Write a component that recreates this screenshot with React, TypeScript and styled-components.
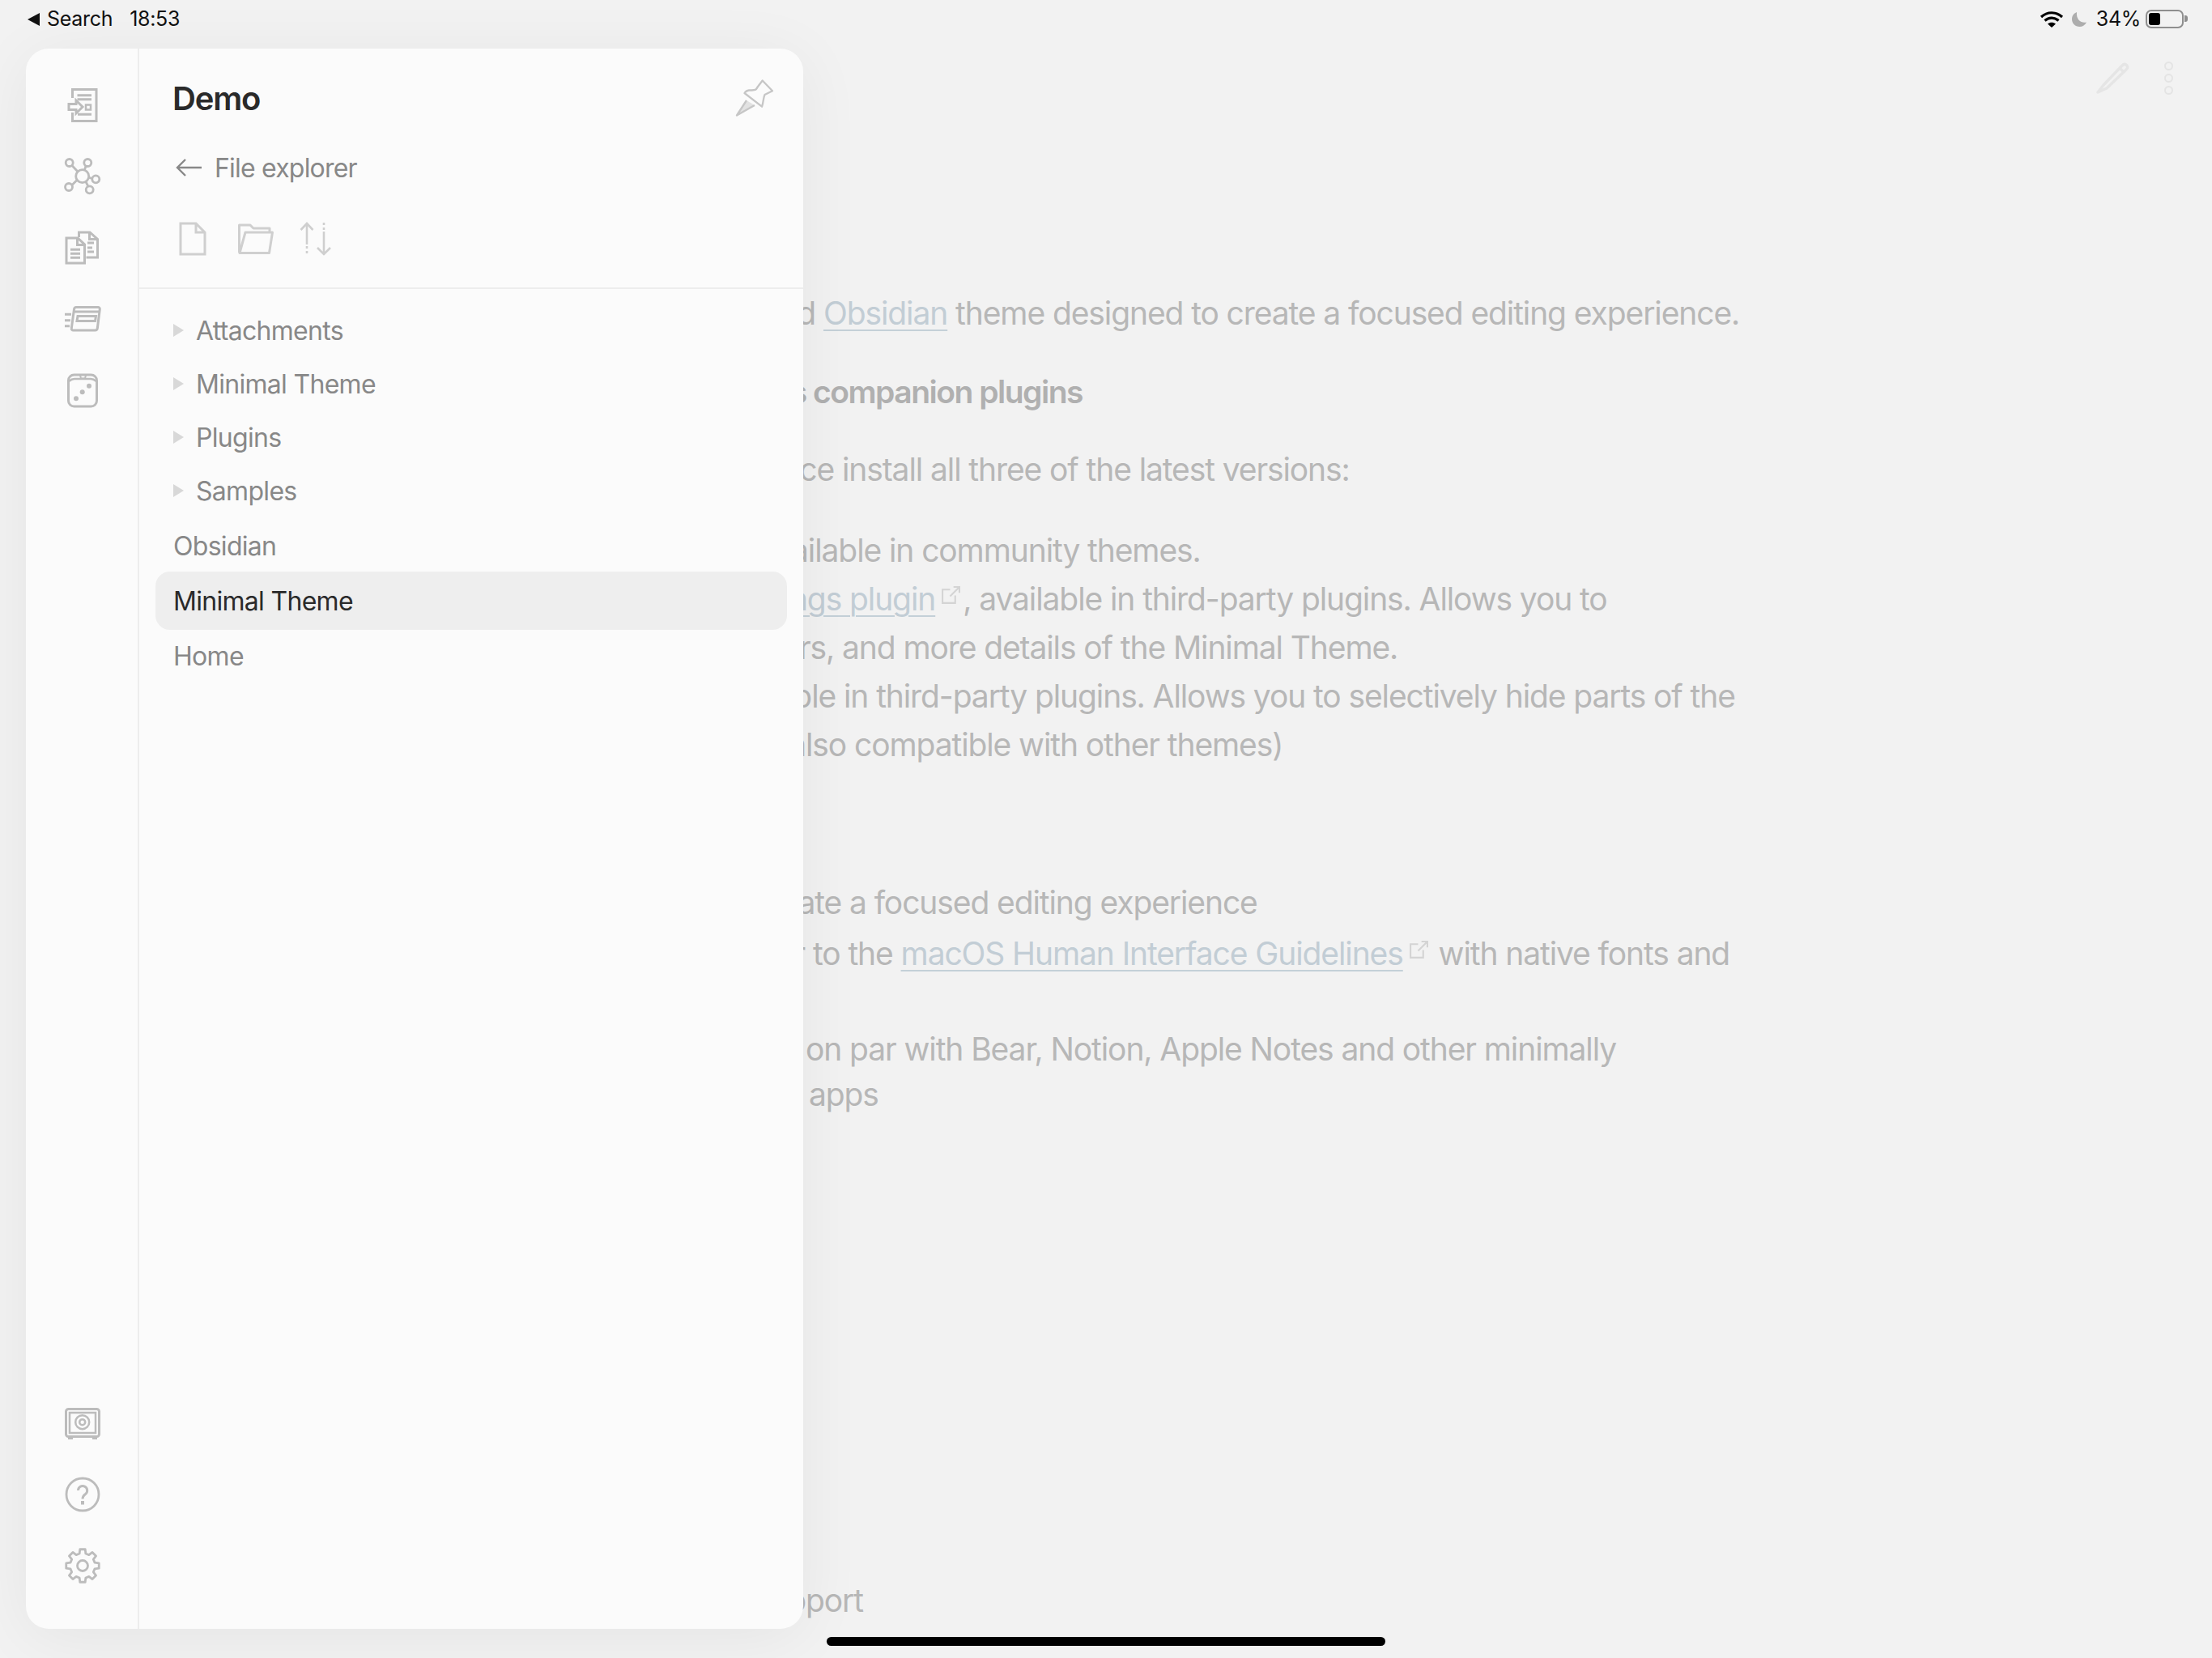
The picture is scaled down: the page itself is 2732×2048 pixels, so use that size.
import * as React from 'react';
import styled, { createGlobalStyle } from 'styled-components';

const GlobalStyle = createGlobalStyle`
  html, body {
    margin: 0;
    padding: 0;
    background: #f2f2f2;
  }
  * {
    box-sizing: border-box;
  }
`

const Screen = styled.div`
  position: relative;
  width: 2732px;
  height: 2048px;
  overflow: hidden;
  background: #f2f2f2;
  font-family: Inter, "Liberation Sans", sans-serif;
`

/* status bar */
const StatusBar = styled.div`
  display: flex;
  align-items: center;
  justify-content: space-between;
  height: 47px;
  padding: 0 35px 0 34px;
  color: #111;
  font-size: 25px;
  line-height: 47px;
  letter-spacing: -0.3px;
`
const StatusGroup = styled.div`
  display: flex;
  align-items: center;
`
const BackCaret = styled.span`
  width: 0;
  height: 0;
  margin-right: 9px;
  border-top: 8px solid transparent;
  border-bottom: 8px solid transparent;
  border-right: 15px solid #111;
`
const Clock = styled.span`
  margin-left: 21px;
`
const BatteryLabel = styled.span`
  margin: 0 6px 0 11px;
`
const Battery = styled.div`
  display: flex;
  align-items: center;
  width: 47px;
  height: 23px;
  padding: 2px;
  border: 2px solid #8e8e8e;
  border-radius: 7px;
  position: relative;

  &::after {
    content: '';
    position: absolute;
    left: 46px;
    top: 5px;
    width: 4px;
    height: 8px;
    background: #8e8e8e;
    border-radius: 0 3px 3px 0;
  }
`
const BatteryFill = styled.div`
  width: 14px;
  height: 15px;
  background: #000;
  border-radius: 3px;
`

/* note behind the drawer */
const NoteToolbar = styled.div`
  display: flex;
  align-items: center;
  justify-content: flex-end;
  gap: 43px;
  height: 96px;
  padding-right: 48px;
  padding-top: 2px;
`
const DotsColumn = styled.div`
  display: flex;
  flex-direction: column;
  gap: 4px;
`
const Dot = styled.div`
  width: 11px;
  height: 11px;
  border: 2px solid #e4e4e4;
  border-radius: 50%;
`
const NoteBody = styled.div`
  padding-top: 214px;
  font-size: 39px;
  line-height: 60px;
  white-space: nowrap;
`
const NoteLine = styled.div<{ $x: number; $gap: number; $bold?: boolean }>`
  padding-left: ${(p) => p.$x}px;
  margin-top: ${(p) => p.$gap}px;
  font-weight: ${(p) => (p.$bold ? 600 : 400)};
  letter-spacing: ${(p) => (p.$bold ? -1.5 : -1.1)}px;
  color: ${(p) => (p.$bold ? '#b0b0b0' : '#b7b7b7')};
`
const NoteLink = styled.span`
  color: #c2cdd5;
  text-decoration: underline;
  text-decoration-color: #c4d0d8;
  text-decoration-thickness: 2px;
  text-underline-offset: 6px;
`
const Lead = styled.span`
  display: inline-block;
  width: 600px;
  margin-left: -600px;
  text-align: right;
  white-space: pre;

  ${NoteLink} & {
    text-decoration: inherit;
    text-decoration-color: #c4d0d8;
    text-decoration-thickness: 2px;
    text-underline-offset: 6px;
  }
`
const ExternalIcon = styled.svg`
  width: 24px;
  height: 23px;
  margin: 0 3px 0 7px;
  vertical-align: 7px;
`

/* drawer */
const Drawer = styled.div`
  position: absolute;
  left: 32px;
  top: 60px;
  width: 960px;
  height: 1952px;
  display: flex;
  background: #fbfbfb;
  border-radius: 28px;
  box-shadow: 0 10px 80px rgba(0, 0, 0, 0.06);
`
const Ribbon = styled.div`
  display: flex;
  flex-direction: column;
  justify-content: space-between;
  width: 140px;
  padding: 26px 0 34px 2px;
  border-right: 2px solid #ededed;
`
const RibbonGroup = styled.div`
  display: flex;
  flex-direction: column;
`
const RibbonButton = styled.div`
  display: flex;
  align-items: center;
  justify-content: center;
  height: 88px;
  color: #bcbcbc;
`
const Pane = styled.div`
  flex: 1;
  display: flex;
  flex-direction: column;
`
const PaneHeader = styled.div`
  height: 297px;
  padding: 0 36px 0 41px;
  border-bottom: 2px solid #ededed;
`
const TitleRow = styled.div`
  display: flex;
  align-items: center;
  justify-content: space-between;
  height: 122px;
`
const Title = styled.div`
  color: #2a2a2a;
  font-size: 40px;
  font-weight: 600;
  letter-spacing: -1.2px;
`
const BackRow = styled.div`
  display: flex;
  align-items: center;
  gap: 15px;
  height: 50px;
  margin-left: 4px;
  color: #888;
  font-size: 32px;
  letter-spacing: -0.8px;
`
const Actions = styled.div`
  display: flex;
  align-items: center;
  gap: 38px;
  margin-top: 42px;
  margin-left: 8px;
  color: #cfcfcf;
`
const SortSlot = styled.div`
  display: flex;
  margin-left: -7px;
`
const FileList = styled.div`
  display: flex;
  flex-direction: column;
  padding: 18px 20px 0 20px;
`
const FolderRow = styled.div`
  display: flex;
  align-items: center;
  height: 66px;
  padding-left: 22px;
  color: #888;
  font-size: 32px;
  letter-spacing: -0.7px;
`
const FolderCaret = styled.span`
  width: 0;
  height: 0;
  margin-right: 15px;
  border-top: 8px solid transparent;
  border-bottom: 8px solid transparent;
  border-left: 13px solid #d8d8d8;
`
const FileRow = styled.div<{ $active?: boolean }>`
  display: flex;
  align-items: center;
  height: ${(p) => (p.$active ? 72 : 68)}px;
  margin: ${(p) => (p.$active ? '-2px 0' : '0')};
  padding-left: 22px;
  border-radius: 18px;
  background: ${(p) => (p.$active ? '#eeeeee' : 'transparent')};
  color: ${(p) => (p.$active ? '#2a2a2a' : '#888')};
  font-size: 32px;
  letter-spacing: -0.7px;
`
const FileGroup = styled.div`
  display: flex;
  flex-direction: column;
  margin-top: 1px;
`

const HomeBar = styled.div`
  position: absolute;
  left: 1021px;
  top: 2022px;
  width: 690px;
  height: 11px;
  background: #000;
  border-radius: 6px;
`

const gearPath = () => {
  const cx = 22
  const cy = 22
  const pts: string[] = []
  for (let i = 0; i < 8; i++) {
    const a = (i * Math.PI) / 4 - Math.PI / 2
    const step = Math.PI / 4
    const p = (r: number, t: number) => `${(cx + r * Math.cos(t)).toFixed(2)} ${(cy + r * Math.sin(t)).toFixed(2)}`
    pts.push(p(15.5, a - step * 0.32), p(20.5, a - step * 0.2), p(20.5, a + step * 0.2), p(15.5, a + step * 0.32))
  }
  return `M${pts.join(' L')} Z`
}

const sv = { fill: 'none', stroke: 'currentColor', strokeWidth: 3 }

const OutlineIcon = () => (
  <svg width="40" height="46" viewBox="0 0 40 46" {...sv}>
    <path d="M7.5 14V3.5H37V42.5H7.5V32" />
    <path d="M13.5 10.7H31M13.5 15.7H31M14 34.3H31" />
    <rect x="24" y="22.5" width="6" height="6" strokeWidth="2.5" />
    <path d="M3 21.5H12V17L20 25L12 33V28.5H3Z" />
  </svg>
)
const GraphIcon = () => (
  <svg width="48" height="48" viewBox="0 0 48 48" {...sv} strokeWidth="2.8">
    <circle cx="23.7" cy="23.7" r="8" />
    <circle cx="7.7" cy="7" r="4.5" />
    <circle cx="30.3" cy="7" r="4.5" />
    <circle cx="40.3" cy="27.3" r="4.5" />
    <circle cx="32.7" cy="40.3" r="4.5" />
    <circle cx="7" cy="37" r="4.5" />
    <path d="M11 10.5L18 18M28 11.5L26.3 16M35.8 26.5L31.5 25.2M30.8 36L28 30.5M11 34.5L17 28.5" />
  </svg>
)
const FilesIcon = () => (
  <svg width="46" height="44" viewBox="0 0 46 44" {...sv}>
    <path d="M3 10H17L25.5 18V41H3ZM16.5 10V18.5H25.5" />
    <path d="M8 24.3H20M8 29.3H20M8 34.3H20" />
    <path d="M18.5 9V3H32L41.5 11.5V34H27.5M31.5 3V11.5H41.5" />
    <path d="M29 16H37M29 22H35M29 27H37" />
  </svg>
)
const CardsIcon = () => (
  <svg width="48" height="36" viewBox="0 0 48 36" {...sv}>
    <path d="M16 3.5H43C44.5 3.5 45.5 4.5 45.3 6L42.3 29.5C42 31.5 41 32 39.5 32H12.5C11 32 10 31 10.3 29.5L13.5 6C13.8 4.3 14.5 3.5 16 3.5Z" />
    <path d="M14 9H45" />
    <path d="M18 14.5H40.5L39.5 20.5H17Z" />
    <path d="M2 12.3H10M2 19.7H9M2 26.7H8" />
  </svg>
)
const DiceIcon = () => (
  <svg width="40" height="44" viewBox="0 0 40 44" {...sv}>
    <rect x="2.5" y="3" width="35" height="39" rx="7" />
    <path d="M3 11C6 8.5 8 8 10 8H30C32 8 34 8.5 37 11" strokeWidth="2.5" />
    <path d="M17 3.5L18 7.5H23L24 3.5" strokeWidth="2" />
    <circle cx="28" cy="16.7" r="3" fill="currentColor" stroke="none" />
    <circle cx="19.7" cy="24.3" r="3" fill="currentColor" stroke="none" />
    <circle cx="12" cy="32.3" r="3" fill="currentColor" stroke="none" />
  </svg>
)
const VaultIcon = () => (
  <svg width="48" height="42" viewBox="0 0 48 42" {...sv}>
    <rect x="3.5" y="3.5" width="41" height="34" rx="3" />
    <rect x="8" y="8" width="32" height="25" strokeWidth="2.5" />
    <circle cx="23.7" cy="19.7" r="8.5" strokeWidth="2.5" />
    <circle cx="23.7" cy="19.7" r="3.5" strokeWidth="2.5" />
    <path d="M6 39.5H12M36 39.5H42" />
  </svg>
)
const HelpIcon = () => (
  <svg width="44" height="44" viewBox="0 0 44 44" {...sv} strokeWidth="2.8">
    <circle cx="22" cy="22" r="20" />
    <path d="M16.5 17a5.6 5.6 0 1 1 9 4.5c-2.5 1.8-3.5 3-3.5 6" strokeWidth="3" />
    <rect x="20" y="30" width="4" height="4.5" fill="currentColor" stroke="none" />
  </svg>
)
const GearIcon = () => (
  <svg width="44" height="44" viewBox="0 0 44 44" {...sv} strokeWidth="2.8">
    <path d={gearPath()} strokeLinejoin="round" />
    <circle cx="22" cy="22" r="6.5" />
  </svg>
)
const PinIcon = () => (
  <svg width="48" height="48" viewBox="0 0 48 48" fill="none" stroke="#c6c6c6" strokeWidth="2.3" strokeLinejoin="round">
    <path d="M33.7 2.5L46 15.3L36.5 20C34.5 24 35 30 33 34.7L11.5 18C13 15.5 15 14.7 17 14.5C21 14.5 25 14.5 26 13L28 10Z" />
    <path d="M14 27L2 45.5L24 33" fill="#e2e2e2" />
  </svg>
)
const BackArrow = () => (
  <svg width="33" height="24" viewBox="0 0 33 24" fill="none" stroke="#888" strokeWidth="2.4">
    <path d="M32 12H2M12 2L2 12L12 22" />
  </svg>
)
const DocIcon = () => (
  <svg width="34" height="42" viewBox="0 0 34 42" {...sv}>
    <path d="M2 2H21L32 13V40H2ZM21 2V13H32" />
  </svg>
)
const FolderIcon = () => (
  <svg width="46" height="40" viewBox="0 0 46 40" {...sv} strokeLinejoin="round">
    <path d="M2.5 37V3H16L20 7H40V12" />
    <path d="M10 12H43.5L39.5 37.5H3Z" />
  </svg>
)
const SortIcon = () => (
  <svg width="40" height="42" viewBox="0 0 40 42" {...sv} strokeWidth="2.6">
    <path d="M9 2V28M1.5 10L9 2L16.5 10" />
    <path d="M9 30V41" strokeDasharray="3 3" />
    <path d="M30 12V40M22 32L30 40L38 32" />
    <path d="M30 1V12" strokeDasharray="3 3" />
  </svg>
)
const WifiIcon = () => (
  <svg width="30" height="22" viewBox="0 0 30 22" fill="none" stroke="#000" strokeWidth="3.2">
    <path d="M2 8C9.5 1 20.5 1 28 8" />
    <path d="M6.5 12.5C11.5 8 18.5 8 23.5 12.5" />
    <path d="M15 21L10 16.5C13 14 17 14 20 16.5Z" fill="#000" stroke="none" />
  </svg>
)
const MoonIcon = () => (
  <svg width="20" height="20" viewBox="0 0 20 20" style={{ marginLeft: 9 }}>
    <path d="M7 1C3 2.5 1 5.8 1 9.5C1 15 5 19 10.5 19C14.2 19 17.5 17 19 13.5C13 15 6 11 7 1Z" fill="#adadad" />
  </svg>
)
const PencilIcon = () => (
  <svg width="42" height="42" viewBox="0 0 42 42" fill="none" stroke="#e5e5e5" strokeWidth="3.4">
    <path d="M10 30L33 6C35 4 37 4 38.5 5.5C40 7 40 9 38 11L14 34L3 39ZM30 9L35.5 14.5" strokeLinejoin="round" />
  </svg>
)
const External = () => (
  <ExternalIcon viewBox="0 0 23 22" fill="none" stroke="#d4d4d4" strokeWidth="2">
    <path d="M11 4H2V20H17V11M11 12L22 1M15 1H22V8" />
  </ExternalIcon>
)

const App = () => {
  return (
    <Screen>
      <GlobalStyle />
      <StatusBar>
        <StatusGroup>
          <BackCaret />
          <span>Search</span>
          <Clock>18:53</Clock>
        </StatusGroup>
        <StatusGroup>
          <WifiIcon />
          <MoonIcon />
          <BatteryLabel>34%</BatteryLabel>
          <Battery>
            <BatteryFill />
          </Battery>
        </StatusGroup>
      </StatusBar>

      <NoteToolbar>
        <PencilIcon />
        <DotsColumn>
          <Dot />
          <Dot />
          <Dot />
        </DotsColumn>
      </NoteToolbar>

      <NoteBody>
        <NoteLine $x={1017} $gap={0}>
          <Lead>distraction-free and </Lead>
          <NoteLink>Obsidian</NoteLink> theme designed to create a focused editing experience.
        </NoteLine>
        <NoteLine $x={1004} $gap={37} $bold>
          <Lead>requires its </Lead>companion plugins
        </NoteLine>
        <NoteLine $x={1040} $gap={36}>
          <Lead>experience </Lead>install all three of the latest versions:
        </NoteLine>
        <NoteLine $x={1098} $gap={40}>
          <Lead>available </Lead>in community themes.
        </NoteLine>
        <NoteLine $x={1049} $gap={0}>
          <NoteLink><Lead>Settings </Lead>plugin</NoteLink><External />, available in third-party plugins. Allows you to
        </NoteLine>
        <NoteLine $x={1040} $gap={0}>
          <Lead>colors, </Lead>and more details of the Minimal Theme.
        </NoteLine>
        <NoteLine $x={1042} $gap={0}>
          <Lead>available </Lead>in third-party plugins. Allows you to selectively hide parts of the
        </NoteLine>
        <NoteLine $x={1055} $gap={0}>
          <Lead>(also </Lead>compatible with other themes)
        </NoteLine>
        <NoteLine $x={1049} $gap={135}>
          <Lead>to create </Lead>a focused editing experience
        </NoteLine>
        <NoteLine $x={1004} $gap={3}>
          <Lead>similar </Lead>to the <NoteLink>macOS Human Interface Guidelines</NoteLink><External /> with native fonts and
        </NoteLine>
        <NoteLine $x={995} $gap={58}>
          <Lead>is </Lead>on par with Bear, Notion, Apple Notes and other minimally
        </NoteLine>
        <NoteLine $x={999} $gap={-4}>
          <Lead>designed </Lead>apps
        </NoteLine>
        <NoteLine $x={995} $gap={565}>
          <Lead>Sup</Lead>port
        </NoteLine>
      </NoteBody>

      <Drawer>
        <Ribbon>
          <RibbonGroup>
            <RibbonButton><OutlineIcon /></RibbonButton>
            <RibbonButton><GraphIcon /></RibbonButton>
            <RibbonButton><FilesIcon /></RibbonButton>
            <RibbonButton><CardsIcon /></RibbonButton>
            <RibbonButton><DiceIcon /></RibbonButton>
          </RibbonGroup>
          <RibbonGroup>
            <RibbonButton><VaultIcon /></RibbonButton>
            <RibbonButton><HelpIcon /></RibbonButton>
            <RibbonButton><GearIcon /></RibbonButton>
          </RibbonGroup>
        </Ribbon>
        <Pane>
          <PaneHeader>
            <TitleRow>
              <Title>Demo</Title>
              <PinIcon />
            </TitleRow>
            <BackRow>
              <BackArrow />
              <span>File explorer</span>
            </BackRow>
            <Actions>
              <DocIcon />
              <FolderIcon />
              <SortSlot><SortIcon /></SortSlot>
            </Actions>
          </PaneHeader>
          <FileList>
            {['Attachments', 'Minimal Theme', 'Plugins', 'Samples'].map((name) => (
              <FolderRow key={name}>
                <FolderCaret />
                {name}
              </FolderRow>
            ))}
            <FileGroup>
              <FileRow>Obsidian</FileRow>
              <FileRow $active>Minimal Theme</FileRow>
              <FileRow>Home</FileRow>
            </FileGroup>
          </FileList>
        </Pane>
      </Drawer>

      <HomeBar />
    </Screen>
  );
};

export default App;
